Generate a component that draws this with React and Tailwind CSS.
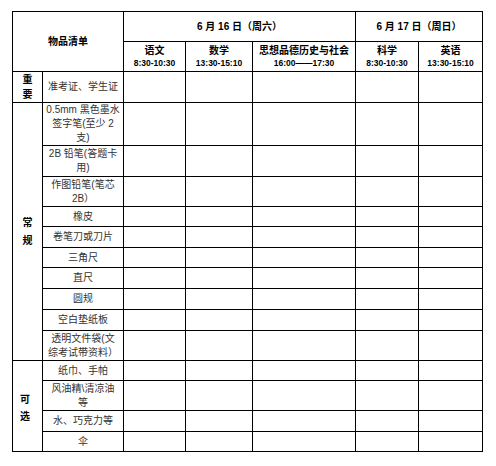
import React from 'react';

const font = { fontFamily: '"Liberation Sans", "Noto Sans CJK SC", sans-serif' };

const cols = ['w-[30px]', 'w-[81px]', 'w-[62px]', 'w-[67px]', 'w-[103px]', 'w-[63px]', 'w-[64px]'];

// [item text (lines), row height class]
const items = [
  { lines: ['准考证、学生证'], h: 'h-[30px]', group: 'important' },
  { lines: ['0.5mm 黑色墨水', '签字笔(至少 2', '支)'], h: 'h-[43px]', group: 'normal' },
  { lines: ['2B 铅笔(答题卡', '用)'], h: 'h-[31px]' },
  { lines: ['作图铅笔(笔芯', '2B）'], h: 'h-[30px]' },
  { lines: ['橡皮'], h: 'h-[20px]' },
  { lines: ['卷笔刀或刀片'], h: 'h-[21px]' },
  { lines: ['三角尺'], h: 'h-[20px]' },
  { lines: ['直尺'], h: 'h-[21px]' },
  { lines: ['圆规'], h: 'h-[21px]' },
  { lines: ['空白垫纸板'], h: 'h-[21px]' },
  { lines: ['透明文件袋(文', '综考试带资料）'], h: 'h-[30px]' },
  { lines: ['纸巾、手帕'], h: 'h-[20px]', group: 'optional' },
  { lines: ['风油精\\清凉油', '等'], h: 'h-[30px]' },
  { lines: ['水、巧克力等'], h: 'h-[21px]' },
  { lines: ['伞'], h: 'h-[20px]' },
];

const cell = 'border border-black p-0';

function Subject({ name, time }) {
  return (
    <th className={`${cell} font-bold text-black`}>
      <div className="text-[10px] leading-[13px]">{name}</div>
      <div className="text-[8.5px] leading-[12px]">{time}</div>
    </th>
  );
}

export default function App() {
  return (
    <div className="w-[496px] h-[466px] bg-white pl-[12px] pt-[11px]" style={font}>
      <table className="table-fixed border-collapse w-[470px] text-center">
        <colgroup>
          {cols.map((c, i) => (
            <col key={i} className={c} />
          ))}
        </colgroup>
        <thead>
          <tr className="h-[30px]">
            <th colSpan={2} rowSpan={2} className={`${cell} text-[10px] font-bold text-black`}>
              物品清单
            </th>
            <th colSpan={3} className={`${cell} text-[10px] font-bold text-black`}>
              6 月 16 日（周六）
            </th>
            <th colSpan={2} className={`${cell} text-[10px] font-bold text-black`}>
              6 月 17 日（周日）
            </th>
          </tr>
          <tr className="h-[30px]">
            <Subject name="语文" time="8:30-10:30" />
            <Subject name="数学" time="13:30-15:10" />
            <Subject name="思想品德历史与社会" time="16:00——17:30" />
            <Subject name="科学" time="8:30-10:30" />
            <Subject name="英语" time="13:30-15:10" />
          </tr>
        </thead>
        <tbody>
          {items.map((it, i) => (
            <tr key={i} className={it.h}>
              {it.group === 'important' && (
                <td className={`${cell} text-[10px] font-bold text-black leading-[15px]`}>
                  重<br />要
                </td>
              )}
              {it.group === 'normal' && (
                <td rowSpan={10} className={`${cell} text-[10px] font-bold text-black leading-[18px]`}>
                  常<br />规
                </td>
              )}
              {it.group === 'optional' && (
                <td rowSpan={4} className={`${cell} text-[10px] font-bold text-black leading-[17px] text-left pl-[7px] pt-[4px]`}>
                  可<br />选
                </td>
              )}
              <td className={`${cell} text-[10px] leading-[14px] text-[#333]`}>
                {it.lines.map((l, j) => (
                  <div key={j}>{l}</div>
                ))}
              </td>
              <td className={cell}></td>
              <td className={cell}></td>
              <td className={cell}></td>
              <td className={cell}></td>
              <td className={cell}></td>
            </tr>
          ))}
        </tbody>
      </table>
    </div>
  );
}
